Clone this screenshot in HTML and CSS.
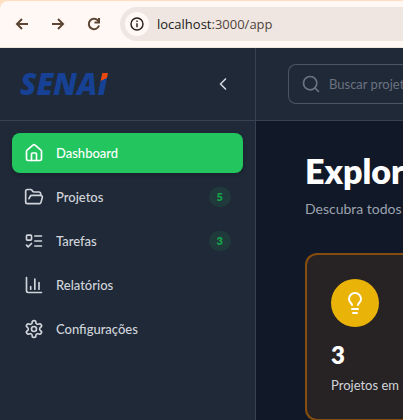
FILE: index.html
```html
<!DOCTYPE html>
<html lang="pt-BR">
<head>
<meta charset="utf-8">
<meta name="viewport" content="width=device-width, initial-scale=1">
<title>SENAI</title>
<link rel="stylesheet" href="styles.css">
</head>
<body>
<div class="browser">
  <button class="tool" type="button" aria-label="Voltar"><svg viewBox="0 0 16 16"><path d="M14 8H3M8 3L3 8l5 5"/></svg></button>
  <button class="tool" type="button" aria-label="Avançar"><svg viewBox="0 0 16 16"><path d="M2 8h11M8 3l5 5-5 5"/></svg></button>
  <button class="tool" type="button" aria-label="Recarregar"><svg viewBox="0 0 16 16"><path d="M12.3 5A5.2 5.2 0 1 0 13 9.5M13 2v4.5H8.5"/></svg></button>
  <div class="address">
    <button class="site-info" type="button" aria-label="Informações do site"><svg viewBox="0 0 16 16"><circle cx="8" cy="8" r="6"/><path d="M8 7.2v4M8 4.6v1.5"/></svg></button>
    <span class="url"><span class="host">localhost</span>:3000/app</span>
  </div>
</div>
<div class="app">
  <aside class="sidebar">
    <div class="brand">
      <a class="logo" href="#">SENA<span class="logo-accent">I</span></a>
      <button class="collapse" type="button" aria-label="Recolher menu"><svg class="icon" viewBox="0 0 24 24"><path d="m15 18-6-6 6-6"/></svg></button>
    </div>
    <nav class="nav">
      <a class="item active" href="#"><svg class="icon" viewBox="0 0 24 24"><path d="M15 21v-8a1 1 0 0 0-1-1h-4a1 1 0 0 0-1 1v8"/><path d="M3 10a2 2 0 0 1 .709-1.528l7-5.999a2 2 0 0 1 2.582 0l7 5.999A2 2 0 0 1 21 10v9a2 2 0 0 1-2 2H5a2 2 0 0 1-2-2z"/></svg><span>Dashboard</span></a>
      <a class="item" href="#"><svg class="icon" viewBox="0 0 24 24"><path d="m6 14 1.5-2.9A2 2 0 0 1 9.24 10H20a2 2 0 0 1 1.94 2.5l-1.54 6a2 2 0 0 1-1.95 1.5H4a2 2 0 0 1-2-2V5a2 2 0 0 1 2-2h3.9a2 2 0 0 1 1.69.9l.81 1.2a2 2 0 0 0 1.67.9H18a2 2 0 0 1 2 2v2"/></svg><span>Projetos</span><span class="badge">5</span></a>
      <a class="item" href="#"><svg class="icon" viewBox="0 0 24 24"><rect x="3" y="5" width="6" height="6" rx="1"/><path d="m3 17 2 2 4-4M13 6h8M13 12h8M13 18h8"/></svg><span>Tarefas</span><span class="badge">3</span></a>
      <a class="item" href="#"><svg class="icon" viewBox="0 0 24 24"><path d="M3 3v16a2 2 0 0 0 2 2h16M18 17V9M13 17V5M8 17v-3"/></svg><span>Relatórios</span></a>
      <a class="item" href="#"><svg class="icon" viewBox="0 0 24 24"><path d="M12.22 2h-.44a2 2 0 0 0-2 2v.18a2 2 0 0 1-1 1.73l-.43.25a2 2 0 0 1-2 0l-.15-.08a2 2 0 0 0-2.73.73l-.22.38a2 2 0 0 0 .73 2.73l.15.1a2 2 0 0 1 1 1.72v.51a2 2 0 0 1-1 1.74l-.15.09a2 2 0 0 0-.73 2.73l.22.38a2 2 0 0 0 2.73.73l.15-.08a2 2 0 0 1 2 0l.43.25a2 2 0 0 1 1 1.73V20a2 2 0 0 0 2 2h.44a2 2 0 0 0 2-2v-.18a2 2 0 0 1 1-1.73l.43-.25a2 2 0 0 1 2 0l.15.08a2 2 0 0 0 2.73-.73l.22-.39a2 2 0 0 0-.73-2.73l-.15-.08a2 2 0 0 1-1-1.74v-.5a2 2 0 0 1 1-1.74l.15-.09a2 2 0 0 0 .73-2.73l-.22-.38a2 2 0 0 0-2.73-.73l-.15.08a2 2 0 0 1-2 0l-.43-.25a2 2 0 0 1-1-1.73V4a2 2 0 0 0-2-2z"/><circle cx="12" cy="12" r="3"/></svg><span>Configurações</span></a>
    </nav>
  </aside>
  <div class="page">
    <header class="topbar">
      <label class="search">
        <svg class="icon" viewBox="0 0 24 24"><circle cx="11" cy="11" r="8"/><path d="m21 21-4.3-4.3"/></svg>
        <input type="text" placeholder="Buscar projetos..." aria-label="Buscar projetos">
      </label>
    </header>
    <main class="content">
      <h1>Explor</h1>
      <p class="lead">Descubra todos</p>
      <section class="card">
        <div class="bulb"><svg class="icon" viewBox="0 0 24 24"><path d="M15 14c.2-1 .7-1.7 1.5-2.5 1-.9 1.5-2.2 1.5-3.5A6 6 0 0 0 6 8c0 1 .2 2.2 1.5 3.5.7.7 1.3 1.5 1.5 2.5M9 18h6M10 22h4"/></svg></div>
        <strong class="count">3</strong>
        <span class="caption">Projetos em I</span>
      </section>
    </main>
  </div>
</div>
</body>
</html>
```
FILE: styles.css
```css
* { box-sizing: border-box; }
html, body { overflow: hidden; }
html { background: #ffdfc0; }
body {
  margin: 0;
  min-height: 100vh;
  display: flex;
  flex-direction: column;
  color: #fff;
  font-family: Lato, "Open Sans", sans-serif;
}
button { border: 0; padding: 0; background: none; color: inherit; }
a { color: inherit; text-decoration: none; }
svg {
  display: block;
  fill: none;
  stroke: currentColor;
  stroke-width: 2;
  stroke-linecap: round;
  stroke-linejoin: round;
}
.icon { width: 20px; height: 20px; flex: none; }

.browser {
  display: flex;
  align-items: center;
  gap: 20px;
  height: 48px;
  padding-left: 14px;
  background: #fff8f4;
  border-top: 1px solid #ffdfc0;
  border-bottom: 1px solid #ede4dc;
  border-top-left-radius: 8px;
}
.tool { width: 16px; height: 16px; color: #5c4632; }
.tool svg { stroke-linecap: butt; stroke-linejoin: miter; }
.address {
  flex: 1;
  display: flex;
  align-items: center;
  gap: 8px;
  height: 34px;
  margin-left: -2px;
  padding-left: 5px;
  background: #efe6e2;
  border-radius: 17px 0 0 17px;
}
.site-info {
  display: grid;
  place-items: center;
  width: 24px;
  height: 24px;
  border-radius: 50%;
  background: #fff8f4;
  color: #211a16;
}
.site-info svg { width: 16px; height: 16px; stroke-width: 1.4; stroke-linecap: butt; }
.url { font: 13px/20px "Open Sans", sans-serif; color: #51443c; }
.host { color: #211a16; }

.app { flex: 1; display: flex; background: #111827; }
.sidebar {
  flex: none;
  width: 256px;
  background: #1f2937;
  border-right: 1px solid #374151;
}
.brand {
  display: flex;
  align-items: center;
  justify-content: space-between;
  height: 73px;
  padding: 0 22px 0 20px;
  border-bottom: 1px solid #374151;
}
.logo {
  font: italic 800 30px/40px "Open Sans", sans-serif;
  color: #164194;
}
.logo-accent {
  background: linear-gradient(155deg, #e84910 42%, #164194 43%);
  background-clip: text;
  color: transparent;
}
.collapse { color: #d1d5db; }
.nav {
  display: flex;
  flex-direction: column;
  gap: 4px;
  padding: 12px;
}
.item {
  display: flex;
  align-items: center;
  gap: 12px;
  height: 40px;
  padding: 0 12px;
  border-radius: 8px;
  color: #d1d5db;
  font-size: 13px;
  font-weight: 500;
  line-height: 20px;
}
.active {
  background: #22c55e;
  color: #fff;
  box-shadow: 0 2px 4px #0003;
}
.badge {
  margin-left: auto;
  padding: 0 8px;
  border-radius: 10px;
  background: #203a3b;
  color: #16a34a;
  font-size: 11px;
  font-weight: 800;
}

.page { flex: 1; min-width: 0; }
.topbar {
  height: 73px;
  padding: 16px 0 0 32px;
  background: #1f2937;
  border-bottom: 1px solid #374151;
}
.search {
  display: flex;
  align-items: center;
  gap: 8px;
  height: 40px;
  padding-left: 12px;
  border: 1px solid #4b5563;
  border-right: 0;
  border-radius: 8px 0 0 8px;
  color: #6b7280;
}
.search input {
  flex: 1;
  min-width: 0;
  padding: 0;
  border: 0;
  outline: 0;
  background: none;
  color: #d1d5db;
  font: 13px/20px Lato, sans-serif;
}
.search input::placeholder { color: #6b7280; opacity: 1; }
.content { padding: 30px 0 0 49px; white-space: nowrap; }
h1 {
  margin: 0;
  font-size: 34px;
  font-weight: 800;
  line-height: 40px;
}
.lead {
  margin: 6px 0 32px;
  color: #9ca3af;
  font-size: 14px;
  line-height: 24px;
}
.card {
  display: flex;
  flex-direction: column;
  padding: 24px 0 24px 24px;
  border: 2px solid #854d0e;
  border-right: 0;
  border-radius: 12px 0 0 12px;
  background: #272224;
}
.bulb {
  display: grid;
  place-items: center;
  width: 48px;
  height: 48px;
  margin-bottom: 12px;
  border-radius: 50%;
  background: #eab308;
}
.bulb .icon { width: 24px; height: 24px; }
.count { font-size: 24px; font-weight: 800; line-height: 32px; }
.caption { margin-top: 4px; color: #d1d5db; font-size: 13px; line-height: 20px; }
```
